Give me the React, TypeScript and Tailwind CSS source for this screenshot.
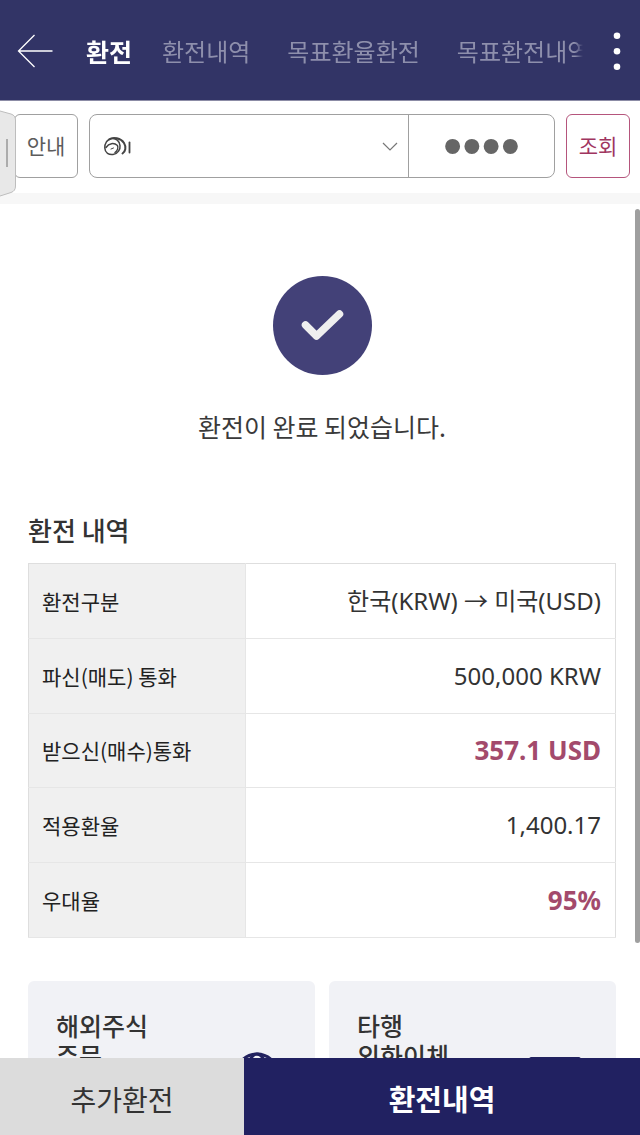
import { useState } from 'react';

const tabs = ['환전', '환전내역', '목표환율환전', '목표환전내역'];

interface DetailRow {
  label: string;
  value: string;
  strong?: boolean;
}

const rows: DetailRow[] = [
  { label: '환전구분', value: '한국(KRW) → 미국(USD)' },
  { label: '파신(매도) 통화', value: '500,000 KRW' },
  { label: '받으신(매수)통화', value: '357.1 USD', strong: true },
  { label: '적용환율', value: '1,400.17' },
  { label: '우대율', value: '95%', strong: true },
];

const Header = () => {
  const [active, setActive] = useState(tabs[0]);

  return (
    <header className="flex h-[101px] shrink-0 items-center border-b border-[#8c8ca6] bg-[#323466] pt-0.5 pl-4 text-white">
      <button type="button" aria-label="뒤로" className="mr-[33px] shrink-0">
        <svg width="37" height="36" viewBox="0 0 37 36" fill="none" stroke="currentColor" strokeWidth="1.3">
          <path d="M18.5 2 L2.5 18 L18.5 34 M2.5 18 H36.5" />
        </svg>
      </button>
      <nav className="flex min-w-0 flex-1 gap-[30px] overflow-hidden mask-r-from-[calc(100%-8px)] whitespace-nowrap">
        {tabs.map((tab) => (
          <button
            key={tab}
            type="button"
            onClick={() => setActive(tab)}
            className={
              tab === active
                ? 'shrink-0 text-[25px] leading-9 font-bold'
                : 'shrink-0 pr-[7px] text-2xl leading-9 text-[#8e8fac]'
            }
          >
            {tab}
          </button>
        ))}
      </nav>
      <button type="button" aria-label="메뉴" className="flex h-12 w-[57px] shrink-0 items-center justify-end pr-[19px]">
        <svg width="8" height="40" viewBox="0 0 8 40" fill="currentColor">
          <circle cx="4" cy="4.8" r="3.3" />
          <circle cx="4" cy="20.2" r="3.3" />
          <circle cx="4" cy="35.7" r="3.3" />
        </svg>
      </button>
    </header>
  );
};

const AccountBar = () => {
  const [password, setPassword] = useState('0000');

  return (
    <div className="relative flex shrink-0 border-b-[11px] border-[#f7f7f7] pt-[13px] pr-[10px] pb-[15px] pl-[14px]">
      <button type="button" className="h-16 w-16 shrink-0 rounded-md border border-[#a0a0a0] text-[21px] text-[#5c5c5c]">
        안내
      </button>
      <div className="mx-[11px] flex h-16 min-w-0 flex-1 rounded-lg border border-[#a0a0a0]">
        <div className="relative min-w-0 flex-1">
          <select aria-label="계좌" className="h-full w-full appearance-none bg-transparent px-4 outline-none">
            <option value="main" label=" " />
          </select>
          {/* scribbled-over account name */}
          <svg
            className="pointer-events-none absolute top-[21px] left-[13px]"
            width="30"
            height="22"
            viewBox="0 0 30 22"
            fill="none"
            stroke="#444"
            strokeWidth="1.5"
            strokeLinecap="round"
          >
            <path d="M9 2.5 C4 3 1.5 8 1.8 12 C2 17 6 19 10 18.5 C15 18 17.5 13 17 9.5 C16.5 5 13 2 9 2.5" />
            <path d="M3 11.5 C6 7 11 6.5 14.5 9.5 M14.5 9.5 C15.5 12 14 15 12 16.5" />
            <path d="M6 3.5 C10 0.5 18 2 21 7 C23.5 11 22.5 15.5 19.5 17.5" strokeWidth="2" />
            <path d="M8 13 L10.5 12" strokeWidth="1" />
            <path d="M26.5 6.5 V16.5" strokeWidth="1.8" />
          </svg>
          <svg
            className="pointer-events-none absolute top-[27px] right-[10px]"
            width="16"
            height="10"
            viewBox="0 0 16 10"
            fill="none"
            stroke="#777"
            strokeWidth="1.2"
          >
            <path d="M1 1 L8 8 L15 1" />
          </svg>
        </div>
        <input
          type="password"
          aria-label="비밀번호"
          value={password}
          onChange={(e) => setPassword(e.target.value)}
          maxLength={4}
          className="w-[146px] border-l border-[#a0a0a0] bg-transparent text-center font-['Liberation_Sans'] text-[55px] text-[#666] outline-none"
        />
      </div>
      <button type="button" className="h-16 w-16 shrink-0 rounded-md border border-[#b5557c] text-[21px] text-[#a0355f]">
        조회
      </button>
      {/* side panel handle */}
      <svg className="absolute top-[9px] left-0" width="17" height="88" viewBox="0 0 17 88">
        <path d="M0 1 L11 4 Q15.5 5.5 15.5 10 V76 Q15.5 81 11 82.5 L0 86" fill="#e8e8e8" stroke="#bdbdbd" />
        <path d="M7 29 V57" stroke="#999" strokeWidth="1.5" />
      </svg>
    </div>
  );
};

const Completed = () => (
  <section className="flex flex-col items-center pt-[72px]">
    <svg width="99" height="99" viewBox="0 0 99 99" fill="none">
      <circle cx="49.5" cy="49.5" r="49.5" fill="#434178" />
      <path d="M32.5 49 L43.5 60 L66.5 38" stroke="#efefef" strokeWidth="7.5" strokeLinecap="round" strokeLinejoin="round" />
    </svg>
    <p className="mt-[31px] text-[25px] leading-10 text-[#3a3a3a]">환전이 완료 되었습니다.</p>
  </section>
);

const ExchangeDetail = () => (
  <section className="pt-16">
    <h2 className="text-[26px] leading-10 font-medium text-[#333]">환전 내역</h2>
    <table className="mt-[13px] h-[375px] w-full table-fixed border-collapse border border-[#dedede] leading-8">
      <tbody>
        {rows.map((row) => (
          <tr key={row.label} className="h-[74px] border-b border-[#e6e6e6]">
            <th scope="row" className="w-[37%] border-r border-[#e6e6e6] bg-[#f0f0f0] pl-[13px] text-left text-[21px] font-normal text-[#222]">
              {row.label}
            </th>
            <td
              className={
                row.strong
                  ? "pr-[14px] text-right font-['Noto_Sans','Noto_Sans_CJK_KR',sans-serif] text-[26px] font-bold text-[#a34a6c]"
                  : "pr-[14px] text-right font-['Noto_Sans','Noto_Sans_CJK_KR',sans-serif] text-2xl text-[#333]"
              }
            >
              {row.value}
            </td>
          </tr>
        ))}
      </tbody>
    </table>
  </section>
);

const Shortcuts = () => (
  <section className="mt-[43px] grid grid-cols-2 gap-[14px] pb-8 text-[25px] leading-[30px] font-medium text-[#333]">
    <a href="#stock" className="flex h-[150px] justify-between rounded-md bg-[#f1f2f6] pt-[29px] pr-[35px] pl-7">
      <span>
        해외주식
        <br />
        주문
      </span>
      <svg className="mt-[42px]" width="46" height="46" viewBox="0 0 46 46" fill="none" stroke="#22225f" strokeWidth="3">
        <circle cx="23" cy="23" r="21" />
        <ellipse cx="23" cy="23" rx="10" ry="21" />
        <path d="M2 23 H44" />
      </svg>
    </a>
    <a href="#transfer" className="flex h-[150px] justify-between rounded-md bg-[#f1f2f6] pt-[29px] pr-[34px] pl-7">
      <span>
        타행
        <br />
        외화이체
      </span>
      <svg className="mt-[46px]" width="54" height="44" viewBox="0 0 54 44" fill="none" stroke="#22225f" strokeWidth="3">
        <rect x="2.5" y="2.5" width="49" height="38" rx="1" />
        <path d="M2 14 H52" />
      </svg>
    </a>
  </section>
);

const App = () => (
  <div className="flex h-screen flex-col bg-white font-['Noto_Sans_CJK_KR',sans-serif]">
    <Header />
    <AccountBar />
    <div className="relative flex min-h-0 flex-1 flex-col">
      <main className="min-h-0 flex-1 overflow-y-auto pr-6 pl-7 [scrollbar-width:none]">
        <Completed />
        <ExchangeDetail />
        <Shortcuts />
      </main>
      {/* scroll position indicator */}
      <div className="absolute top-[5px] right-0 h-[86%] w-[5px] rounded-full bg-[#9f9f9f]" />
    </div>
    <footer className="grid h-[77px] shrink-0 grid-cols-[61fr_99fr]">
      <button type="button" className="bg-[#dcdcdc] pt-1 text-[28px] text-[#333]">
        추가환전
      </button>
      <button type="button" className="bg-[#212161] pt-1 text-[29px] font-bold text-white">
        환전내역
      </button>
    </footer>
  </div>
);

export default App;
